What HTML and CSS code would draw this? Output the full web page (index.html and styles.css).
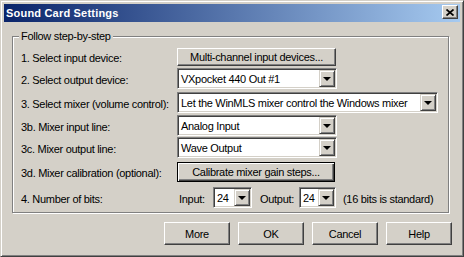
FILE: index.html
```html
<!DOCTYPE html>
<html lang="en">

<head>
    <meta charset="UTF-8">
    <title>Sound Card Settings</title>
    <link rel="stylesheet" href="styles.css">
</head>

<body>
    <div class="window">
        <!-- 标题栏 -->
        <div class="titlebar">
            <span class="title">Sound Card Settings</span>
            <span class="close">
                <svg width="8" height="7" viewBox="0 0 8 7"><path d="M0.5 0.5 L7.5 6.5 M7.5 0.5 L0.5 6.5" stroke="#000" stroke-width="1.7" fill="none"/></svg>
            </span>
        </div>

        <div class="content">
            <fieldset class="group">
                <legend>Follow step-by-step</legend>

                <div class="row r1">
                    <span class="label">1. Select input device:</span>
                    <button class="btn btn-input">Multi-channel input devices...</button>
                </div>

                <div class="row r2">
                    <span class="label">2. Select output device:</span>
                    <div class="combo combo-md"><span class="value">VXpocket 440 Out #1</span><span class="drop"><i></i></span></div>
                </div>

                <div class="row r3">
                    <span class="label">3. Select mixer (volume control):</span>
                    <div class="combo combo-lg"><span class="value">Let the WinMLS mixer control the Windows mixer</span><span class="drop"><i></i></span></div>
                </div>

                <div class="row r4">
                    <span class="label">3b. Mixer input line:</span>
                    <div class="combo combo-md"><span class="value">Analog Input</span><span class="drop"><i></i></span></div>
                </div>

                <div class="row r5">
                    <span class="label">3c. Mixer output line:</span>
                    <div class="combo combo-md"><span class="value">Wave Output</span><span class="drop"><i></i></span></div>
                </div>

                <div class="row r6">
                    <span class="label">3d. Mixer calibration (optional):</span>
                    <button class="btn btn-default btn-calibrate">Calibrate mixer gain steps...</button>
                </div>

                <div class="row r7">
                    <span class="label">4. Number of bits:</span>
                    <span class="bits-label in">Input:</span>
                    <div class="combo combo-bits-in"><span class="value">24</span><span class="drop"><i></i></span></div>
                    <span class="bits-label out">Output:</span>
                    <div class="combo combo-bits-out"><span class="value">24</span><span class="drop"><i></i></span></div>
                    <span class="hint">(16 bits is standard)</span>
                </div>
            </fieldset>

            <!-- 底部按钮 -->
            <div class="actions">
                <button class="btn btn-action">More</button>
                <button class="btn btn-action">OK</button>
                <button class="btn btn-action">Cancel</button>
                <button class="btn btn-action">Help</button>
            </div>
        </div>
    </div>
</body>

</html>
```

FILE: styles.css
```css
/* 页面整体 */
body {
    margin: 0;
    padding: 0;
    font-family: 'Liberation Sans', Arial, sans-serif;
    font-size: 11px;
    letter-spacing: -0.3px;
    color: #000;
    background: #d4d0c8;
}

/* 窗口外框 */
.window {
    width: 464px;
    height: 257px;
    box-sizing: border-box;
    background: #d4d0c8;
    border: 1px solid;
    border-color: #d4d0c8 #404040 #404040 #d4d0c8;
    box-shadow: inset 1px 1px #fff, inset -1px -1px #808080;
    padding: 3px;
}

/* 标题栏 */
.titlebar {
    height: 18px;
    display: flex;
    align-items: center;
    justify-content: space-between;
    background: linear-gradient(to right, #0a246a, #a6caf0);
    color: #fff;
    padding-left: 2px;
}

.title {
    font-weight: bold;
    font-size: 11px;
    letter-spacing: 0.2px;
}

.close {
    width: 16px;
    height: 14px;
    box-sizing: border-box;
    margin-right: 2px;
    margin-bottom: 2px;
    display: flex;
    align-items: center;
    justify-content: center;
    background: #d4d0c8;
    border: 1px solid;
    border-color: #fff #404040 #404040 #fff;
    box-shadow: inset -1px -1px #808080;
}

.content {
    padding: 0 8px;
}

/* 分组框 */
.group {
    width: 437px;
    height: 183px;
    box-sizing: border-box;
    margin: 8px 0 0 0;
    padding: 0 0 0 8px;
    border: 1px solid #808080;
    box-shadow: inset 1px 1px #fff, 1px 1px #fff;
}

.group legend {
    margin-left: -2px;
    padding: 0 2px;
    line-height: 13px;
    background: #d4d0c8;
}

/* 每一行 */
.row {
    display: flex;
    align-items: center;
    white-space: nowrap;
}

.label {
    width: 156px;
    flex: none;
    padding-top: 2px;
}

.r1 { margin-top: 5px; height: 18px; }
.r2 { margin-top: 2px; height: 21px; }
.r3 { margin-top: 3px; height: 21px; }
.r4 { margin-top: 2px; height: 21px; }
.r5 { margin-top: 1px; height: 21px; }
.r6 { margin-top: 4px; height: 20px; }
.r7 { margin-top: 5px; height: 21px; }

/* 按钮 */
.btn {
    font-family: inherit;
    font-size: 11px;
    letter-spacing: inherit;
    color: #000;
    background: #d4d0c8;
    border: 1px solid;
    border-color: #fff #404040 #404040 #fff;
    box-shadow: inset -1px -1px #808080;
    padding: 0;
    margin: 0;
    box-sizing: border-box;
}

.btn-input {
    width: 159px;
    height: 18px;
}

.btn-default {
    border: 1px solid #000;
    box-shadow: inset 1px 1px #fff, inset -1px -1px #404040, inset -2px -2px #808080;
}

.btn-calibrate {
    width: 158px;
    height: 20px;
}

/* 下拉框 */
.combo {
    height: 21px;
    box-sizing: border-box;
    display: flex;
    align-items: stretch;
    background: #fff;
    border: 1px solid;
    border-color: #808080 #fff #fff #808080;
    box-shadow: inset 1px 1px #404040, inset -1px -1px #d4d0c8;
    padding: 2px;
}

.combo .value {
    flex: 1;
    padding-left: 1px;
    line-height: 17px;
    white-space: nowrap;
    overflow: hidden;
}

.combo .drop {
    width: 16px;
    flex: none;
    box-sizing: border-box;
    background: #d4d0c8;
    border: 1px solid;
    border-color: #d4d0c8 #404040 #404040 #d4d0c8;
    box-shadow: inset 1px 1px #fff, inset -1px -1px #808080;
    display: flex;
    align-items: center;
    justify-content: center;
    margin: -1px -1px -1px 0;
}

.combo .drop i {
    width: 0;
    height: 0;
    border-left: 4px solid transparent;
    border-right: 4px solid transparent;
    border-top: 4px solid #000;
}

.combo-md { width: 160px; }
.combo-lg { width: 261px; }
.combo-bits-in { width: 39px; }
.combo-bits-out { width: 37px; }

.bits-label {
    flex: none;
    padding-top: 2px;
}

.bits-label.in {
    width: 34px;
    padding-left: 2px;
}

.bits-label.out {
    width: 39px;
    padding-left: 8px;
}

.hint {
    padding-left: 7px;
    padding-top: 2px;
}

/* 底部按钮栏 */
.actions {
    display: flex;
    justify-content: flex-end;
    gap: 8px;
    margin-top: 9px;
}

.btn-action {
    width: 66px;
    height: 23px;
}
```
